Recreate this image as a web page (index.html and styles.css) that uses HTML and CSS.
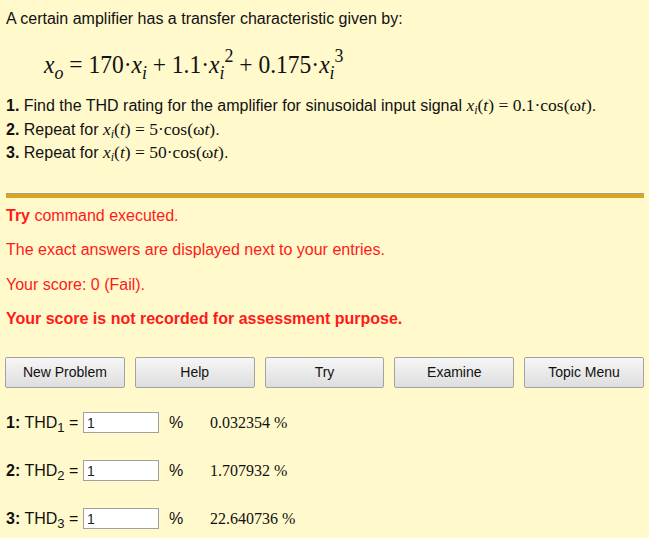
FILE: index.html
```html
<!DOCTYPE html>
<html>
<head>
<meta charset="utf-8">
<link rel="stylesheet" href="styles.css">
</head>
<body>
<div class="page">
  <p class="intro">A certain amplifier has a transfer characteristic given by:</p>
  <div class="eq"><span class="eqin"><i>x</i><sub class="so"><i>o</i></sub> = 170·<i>x</i><sub class="si"><i>i</i></sub> + 1.1·<i>x</i><sub class="si"><i>i</i></sub><sup>2</sup> + 0.175·<i>x</i><sub class="si"><i>i</i></sub><sup>3</sup></span></div>
  <div class="tasks">
    <div class="task"><b>1.</b> Find the THD rating for the amplifier for sinusoidal input signal <span class="m"><i>x</i><sub><i>i</i></sub>(<i>t</i>) = 0.1·cos(ω<i>t</i>)</span>.</div>
    <div class="task"><b>2.</b> Repeat for <span class="m"><i>x</i><sub><i>i</i></sub>(<i>t</i>) = 5·cos(ω<i>t</i>)</span>.</div>
    <div class="task"><b>3.</b> Repeat for <span class="m"><i>x</i><sub><i>i</i></sub>(<i>t</i>) = 50·cos(ω<i>t</i>)</span>.</div>
  </div>
  <div class="rule"></div>
  <div class="msgs">
    <p><b>Try</b> command executed.</p>
    <p>The exact answers are displayed next to your entries.</p>
    <p>Your score: 0 (Fail).</p>
    <p><b>Your score is not recorded for assessment purpose.</b></p>
  </div>
  <div class="buttons">
    <button class="btn">New Problem</button>
    <button class="btn">Help</button>
    <button class="btn">Try</button>
    <button class="btn">Examine</button>
    <button class="btn">Topic Menu</button>
  </div>
  <div class="answers">
    <div class="row"><span class="lbl"><b>1:</b> THD<sub>1</sub> =</span><input class="inp" type="text" value="1"><span class="pct">%</span><span class="ans">0.032354 %</span></div>
    <div class="row"><span class="lbl"><b>2:</b> THD<sub>2</sub> =</span><input class="inp" type="text" value="1"><span class="pct">%</span><span class="ans">1.707932 %</span></div>
    <div class="row"><span class="lbl"><b>3:</b> THD<sub>3</sub> =</span><input class="inp" type="text" value="1"><span class="pct">%</span><span class="ans">22.640736 %</span></div>
  </div>
</div>
</body>
</html>
```
FILE: styles.css
```css
html, body {
  margin: 0;
  padding: 0;
  background: #fff9cc;
}
.page {
  padding: 10px 5px 0 6px;
  font-family: "Liberation Sans", Arial, sans-serif;
  font-size: 16px;
  color: #111;
}
.intro {
  margin: 0;
  line-height: 18px;
}
.eq {
  font-family: "Liberation Serif", "Times New Roman", serif;
  font-size: 25px;
  margin: 22px 0 0 38px;
  line-height: 30px;
  height: 33px;
}
.eqin {
  display: inline-block;
  transform: scaleX(0.94);
  transform-origin: left center;
  white-space: nowrap;
}
.eq sub, .eq sup {
  font-size: 19px;
  line-height: 0;
}
.eq sub { vertical-align: -6px; }
.eq sup { vertical-align: 11px; }
.tasks {
  margin-top: 11px;
}
.task {
  line-height: 23.5px;
}
.m {
  font-family: "Liberation Serif", "Times New Roman", serif;
  font-size: 17.5px;
}
.m sub {
  font-size: 12px;
  line-height: 0;
  vertical-align: -3px;
}
.rule {
  margin-top: 28px;
  border-top: 1px solid #a0a0a0;
  height: 4px;
  background: #daa520;
}
.msgs {
  color: #ff1a1a;
  margin-top: 9px;
}
.msgs p {
  margin: 0 0 16px 0;
  line-height: 18.5px;
}
.buttons {
  display: flex;
  gap: 10px;
  margin-top: 28px;
  margin-left: -1px;
}
.btn {
  width: 120px;
  height: 31px;
  border: 1px solid #a3a3a3;
  border-radius: 2px;
  background: linear-gradient(#f6f6f6, #dedede);
  font-family: "Liberation Sans", Arial, sans-serif;
  font-size: 14px;
  color: #111;
  padding: 0;
}
.answers {
  margin-top: 11px;
}
.row {
  display: flex;
  align-items: center;
  height: 48px;
}
.lbl sub {
  font-size: 13px;
  line-height: 0;
  vertical-align: -4px;
}
.lbl {
  width: 77px;
}
.inp {
  width: 76px;
  height: 21px;
  box-sizing: border-box;
  border: 1px solid #a0a0a0;
  background: #fff;
  font-family: "Liberation Sans", Arial, sans-serif;
  font-size: 14px;
  padding: 0 3px;
  margin: 0;
  color: #222;
}
.pct {
  margin-left: 10px;
  width: 41px;
}
.ans {
  font-family: "Liberation Serif", "Times New Roman", serif;
  font-size: 16px;
}
```
